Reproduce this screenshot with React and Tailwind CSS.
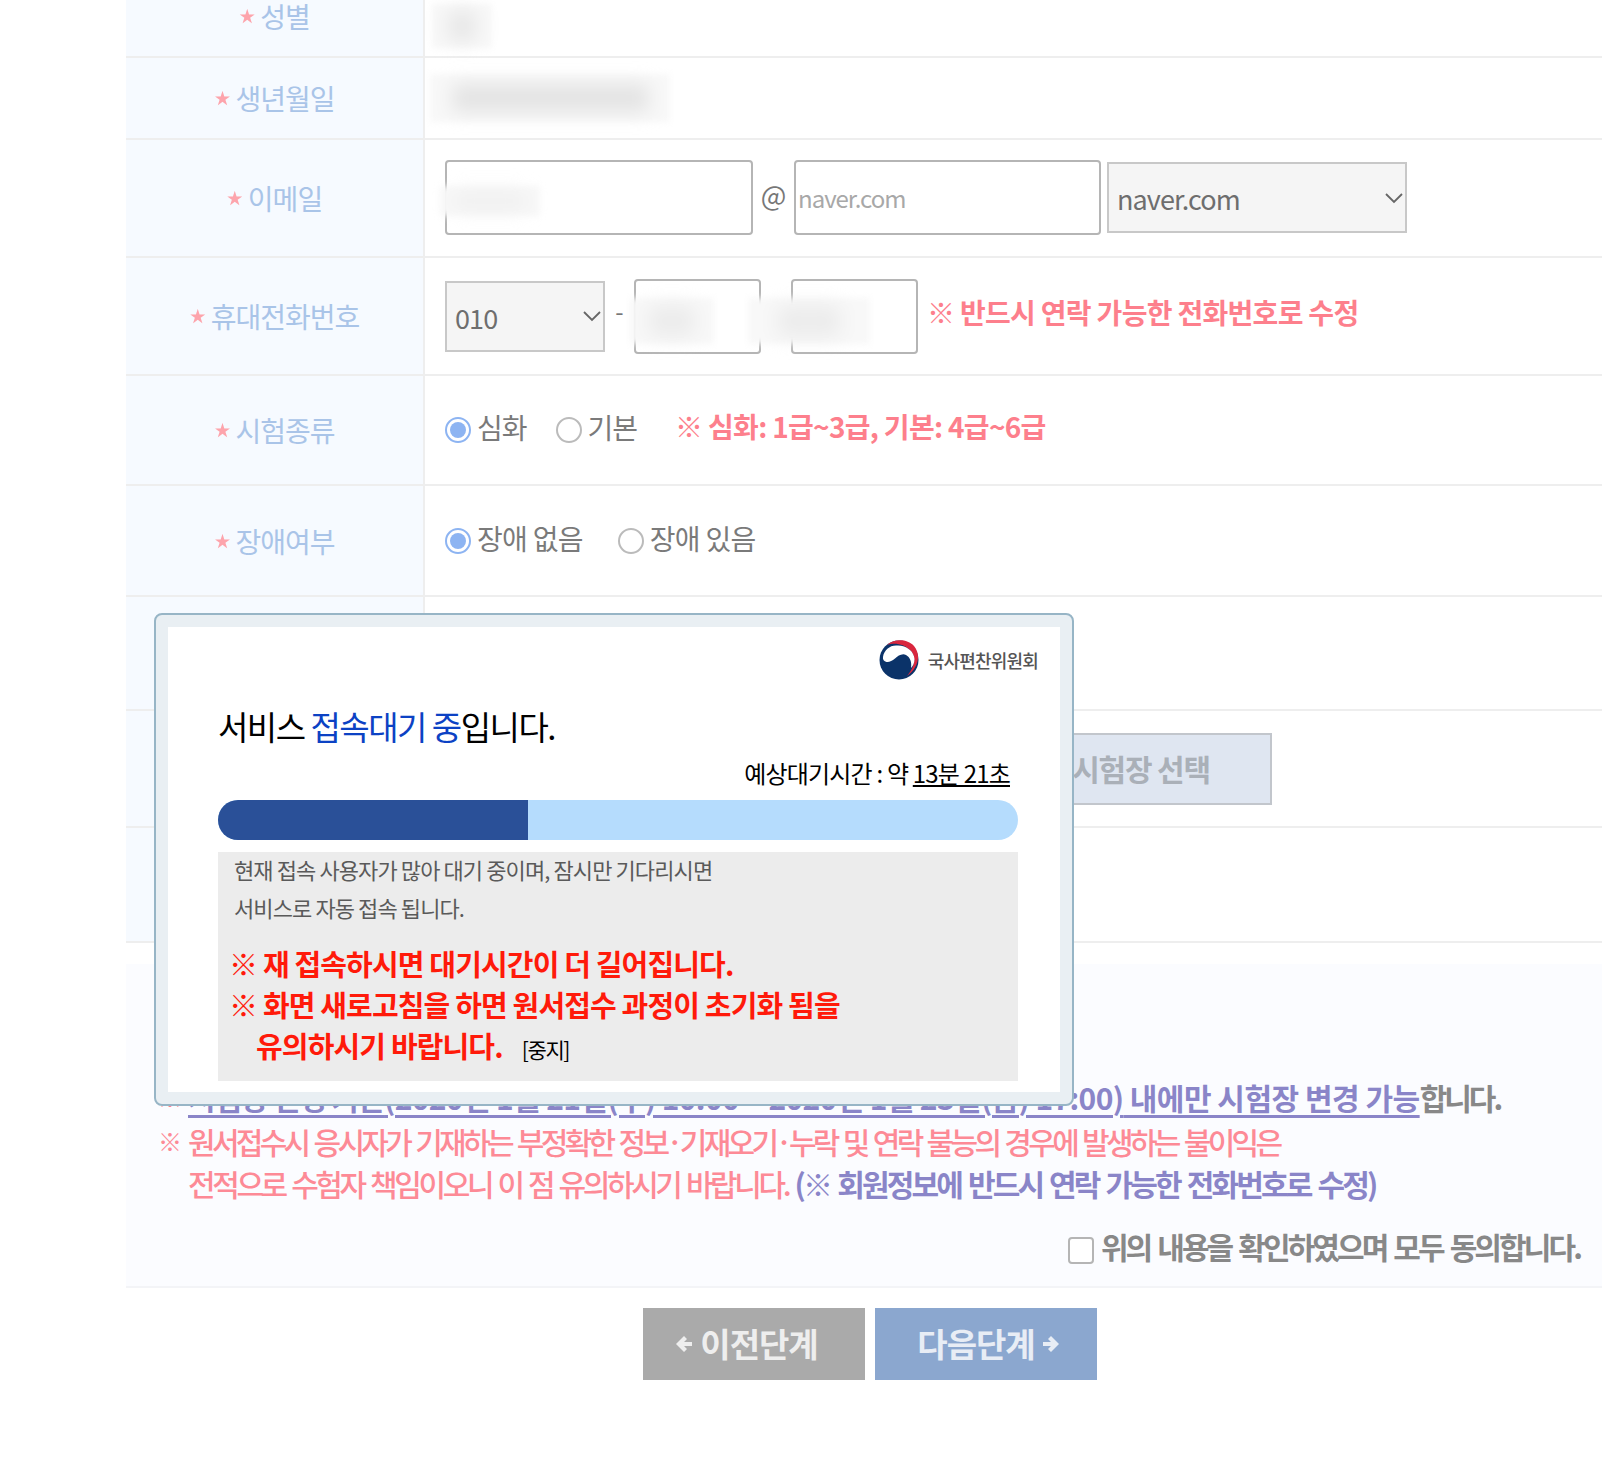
import React from "react";

const FONT = "font-['Noto_Sans_CJK_KR','Noto_Sans',sans-serif]";

const Star = () => <span className="text-[16px] text-[#fda4ac] mr-[6px] relative -top-[1px] blur-[0.6px]">★</span>;

const Row = ({ label, className, labelClass = "", children }) => (
  <div className={`flex border-b-2 border-[#eeeeee] ${className}`}>
    <div
      className={`w-[299px] shrink-0 bg-[#f6faff] border-r-2 border-[#eeeeee] flex items-center justify-center text-[28px] tracking-[-1px] text-[#a9c4e8] ${labelClass}`}
    >
      {label && <Star />}
      {label}
    </div>
    <div className="flex-1 flex items-center pl-[20px]">{children}</div>
  </div>
);

// masked personal data: pale box with a soft grey lump inside
const Smudge = ({ className, inner }) => (
  <div className={`absolute bg-[#f8f8f8] blur-[3px] flex items-center justify-center ${className}`}>
    <div className={`blur-[9px] ${inner}`} />
  </div>
);

const TextBox = ({ className, children }) => (
  <div className={`relative h-[75px] border-2 border-[#b5b5b5] rounded-[4px] bg-white flex items-center ${className}`}>{children}</div>
);

const Select = ({ className, value }) => (
  <div className={`h-[71px] border-2 border-[#c8c8c8] bg-[#f5f5f5] flex items-center justify-between text-[#6e6e6e] text-[27px] ${className}`}>
    <span className="pl-[8px] pt-[4px] tracking-[-0.9px]">{value}</span>
    <svg width="18" height="12" viewBox="0 0 18 12" fill="none" className="mr-[2px]">
      <path d="M1 2l8 8 8-8" stroke="#666666" strokeWidth="1.8" />
    </svg>
  </div>
);

const Radio = ({ checked, label, className = "", textClass = "" }) => (
  <div className={`flex items-center ${className}`}>
    {checked ? (
      <span className="w-[26px] h-[26px] rounded-full border-2 border-[#8db4f2] bg-white flex items-center justify-center">
        <span className="w-[16px] h-[16px] rounded-full bg-[#8db4f2]" />
      </span>
    ) : (
      <span className="w-[26px] h-[26px] rounded-full border-2 border-[#bbbbbb] bg-white" />
    )}
    <span className={`ml-[6px] text-[28px] text-[#7a7a7a] ${textClass}`}>{label}</span>
  </div>
);

const Logo = () => (
  <svg width="40" height="40" viewBox="0 0 40 40">
    <circle cx="20" cy="20" r="19.5" fill="#0b3369" />
    <path d="M8 5C14-1 28-2 35 6c7 8 5 22-7 30 7-8 10-18 4-25C26 4 15 2 8 5z" fill="#d9273e" />
    <path d="M4 17C5 10 11 5 18 5.500 27 5 35 11 35.500 19c0 4-1.500 7-3.500 9 1-6-1-11-5-13-4-2-8 1-11 3.500-3 2.500-6 4-8.500 3.500C5 21.500 3.500 19.500 4 17z" fill="#ffffff" />
  </svg>
);

const ArrowLeft = () => (
  <svg width="17" height="16" viewBox="0 0 17 16" className="mr-[8px]">
    <path d="M9 0L1 8l8 8 3-3-3-3h8V6H9l3-3z" fill="#eeeeee" />
  </svg>
);

const ArrowRight = () => (
  <svg width="17" height="16" viewBox="0 0 17 16" className="ml-[8px]">
    <path d="M8 0l8 8-8 8-3-3 3-3H0V6h8L5 3z" fill="#e8edf5" />
  </svg>
);

const App = () => {
  return (
    <div className={`relative h-[1484px] bg-white overflow-hidden ${FONT}`}>
      <div className="pl-[126px]">
        <Row label="성별" className="h-[58px]" labelClass="pb-[24px]">
          <div className="relative h-full -ml-[13px]">
            <Smudge className="left-0 top-[4px] w-[60px] h-[44px]" inner="w-[26px] h-[30px] bg-[#e6e6e6]" />
          </div>
        </Row>
        <Row label="생년월일" className="h-[82px]">
          <div className="relative h-[48px] -ml-[15px]">
            <Smudge className="left-0 top-0 w-[240px] h-[48px]" inner="w-[195px] h-[26px] bg-[#e2e2e2]" />
          </div>
        </Row>
        <Row label="이메일" className="h-[118px]">
          <div className="flex items-center mb-[1px]">
            <TextBox className="w-[308px]">
              <Smudge className="-left-[7px] top-[24px] w-[100px] h-[30px]" inner="w-[70px] h-[18px] bg-[#efefef]" />
            </TextBox>
            <span className="w-[41px] text-center text-[27px] text-[#777777] mb-[4px]">@</span>
            <TextBox className="w-[307px] pl-[2px] text-[24px] tracking-[-1px] text-[#a8a8a8]">naver.com</TextBox>
            <Select className="w-[300px] ml-[6px]" value="naver.com" />
          </div>
        </Row>
        <Row label="휴대전화번호" className="h-[118px]">
          <div className="flex items-center">
            <Select className="w-[160px]" value="010" />
            <span className="w-[29px] text-center text-[24px] text-[#777777] mb-[10px]">-</span>
            <TextBox className="w-[127px]">
              <Smudge className="-left-[6px] top-[17px] w-[84px] h-[46px]" inner="w-[44px] h-[30px] bg-[#ebebeb]" />
            </TextBox>
            <TextBox className="w-[127px] ml-[30px]">
              <Smudge className="-left-[45px] top-[17px] w-[122px] h-[46px]" inner="w-[60px] h-[30px] bg-[#ebebeb]" />
            </TextBox>
            <span className="ml-[9px] mb-[8px] text-[28px] font-bold tracking-[-0.7px] text-[#fd7f8c]">
              <span className="font-normal">※</span> 반드시 연락 가능한 전화번호로 수정
            </span>
          </div>
        </Row>
        <Row label="시험종류" className="h-[110px]">
          <Radio checked label="심화" textClass="tracking-[-1px] mb-[7px]" />
          <Radio label="기본" className="ml-[29px]" textClass="tracking-[-1px] mb-[7px]" />
          <span className="ml-[38px] mb-[9px] text-[28px] font-bold tracking-[-0.7px] text-[#fd7f8c]">
            <span className="font-normal">※</span> 심화: 1급~3급, 기본: 4급~6급
          </span>
        </Row>
        <Row label="장애여부" className="h-[111px]">
          <Radio checked label="장애 없음" textClass="tracking-[-0.7px] mb-[6px]" />
          <Radio label="장애 있음" className="ml-[35px]" textClass="tracking-[-0.7px] mb-[6px]" />
        </Row>
        <Row className="h-[114px]" />
        <Row className="h-[117px]">
          <div className="ml-[565px] w-[262px] h-[72px] border-2 border-[#c2c6cc] bg-[#dfe6f1] flex items-center justify-center text-[30px] font-bold tracking-[-1.2px] text-[#aab0b8]">
            시험장 선택
          </div>
        </Row>
        <Row className="h-[115px]" />
        <div className="mt-[21px] h-[324px] bg-[#fbfcff] border-b-2 border-[#f3f4f7] pl-[62px] pt-[111px] text-[30px]">
          <p className="h-[44px] whitespace-nowrap relative font-bold">
            <span className="absolute -left-[30px] top-[4px] text-[24px] text-[#fd7f8c]">※</span>
            <span className="text-[#8a85c8] underline underline-offset-[5px] tracking-[-1.2px]">
              시험장 변경 기간<span className="tracking-[-0.65px]">(2020년 1월 21일(수) 10:00 ~ 2020년 1월 23일(금) 17:00)</span>
              <span className="tracking-[-0.5px]"> 내에만 시험장 변경 가능</span>
            </span>
            <span className="tracking-[-3px] text-[#888888]">합니다.</span>
          </p>
          <p className="h-[42px] whitespace-nowrap relative font-medium tracking-[-3.7px] [word-spacing:3px] text-[#fd8a96]">
            <span className="absolute -left-[30px] top-[4px] text-[24px] font-bold tracking-normal">※</span>
            원서접수시 응시자가 기재하는 부정확한 정보·기재오기·누락 및 연락 불능의 경우에 발생하는 불이익은
          </p>
          <p className="h-[42px] whitespace-nowrap font-medium [word-spacing:3px] text-[#fd8a96]">
            <span className="tracking-[-3.4px]">전적으로 수험자 책임이오니 이 점 유의하시기 바랍니다. </span>
            <span className="font-bold tracking-[-2.85px] text-[#8a85c8]">(※ 회원정보에 반드시 연락 가능한 전화번호로 수정)</span>
          </p>
          <div className="flex items-center justify-end mt-[21px] pr-[22px]">
            <span className="w-[26px] h-[27px] rounded-[4px] border-2 border-[#b5b5b5] bg-white mr-[7px] mt-[7px]" />
            <span className="font-bold tracking-[-2.9px] [word-spacing:3px] text-[#888888]">위의 내용을 확인하였으며 모두 동의합니다.</span>
          </div>
        </div>
        <div className="flex justify-center gap-[10px] mt-[20px] pl-[11px]">
          <div className="w-[222px] h-[72px] pr-[14px] bg-[#aaaaaa] flex items-center justify-center text-[33px] font-bold tracking-[-1px] text-[#eeeeee]">
            <ArrowLeft />
            이전단계
          </div>
          <div className="w-[222px] h-[72px] pl-[6px] bg-[#8ba7cf] flex items-center justify-center text-[33px] font-bold tracking-[-1px] text-[#e8edf5]">
            다음단계
            <ArrowRight />
          </div>
        </div>
      </div>

      {/* waiting popup */}
      <div className="absolute left-[154px] top-[613px] w-[920px] h-[493px] rounded-[8px] border-2 border-[#97b5c6] bg-[#e9eff3] p-[12px]">
        <div className="h-full bg-white pl-[50px] pr-[42px] pt-[13px]">
          <div className="flex items-center justify-end mr-[-20px] h-[40px]">
            <Logo />
            <span className="ml-[9px] text-[18px] font-medium tracking-[-0.8px] text-[#555555]">국사편찬위원회</span>
          </div>
          <p className="mt-[21px] text-[33px] tracking-[-1.5px] text-black leading-[50px]">
            서비스 <span className="text-[#0c42c4]">접속대기 중</span>입니다.
          </p>
          <p className="mt-[2px] pr-[8px] text-right text-[24px] tracking-[-0.8px] text-black leading-[40px]">
            예상대기시간 : 약 <span className="underline">13분 21초</span>
          </p>
          <div className="mt-[7px] h-[40px] rounded-full bg-[#b5dcfd] overflow-hidden">
            <div className="w-[310px] h-full bg-[#2a5098]" />
          </div>
          <div className="mt-[12px] h-[229px] bg-[#ececec] pl-[16px] text-[22px] tracking-[-0.9px] text-[#5a5a5a]">
            <p className="leading-[38px] relative -top-[2px]">현재 접속 사용자가 많아 대기 중이며, 잠시만 기다리시면</p>
            <p className="leading-[38px] relative -top-[2px]">서비스로 자동 접속 됩니다.</p>
            <div className="mt-[15px] -ml-[5px] text-[29px] font-bold tracking-[-0.85px] text-[#ff1a0a] leading-[41px]">
              <p><span className="font-normal">※</span> 재 접속하시면 대기시간이 더 길어집니다.</p>
              <p><span className="font-normal">※</span> 화면 새로고침을 하면 원서접수 과정이 초기화 됨을</p>
              <p className="pl-[27px]">
                유의하시기 바랍니다.
                <span className="ml-[19px] text-[21px] font-normal text-black tracking-[-1.4px]">[중지]</span>
              </p>
            </div>
          </div>
        </div>
      </div>
    </div>
  );
};

export default App;
